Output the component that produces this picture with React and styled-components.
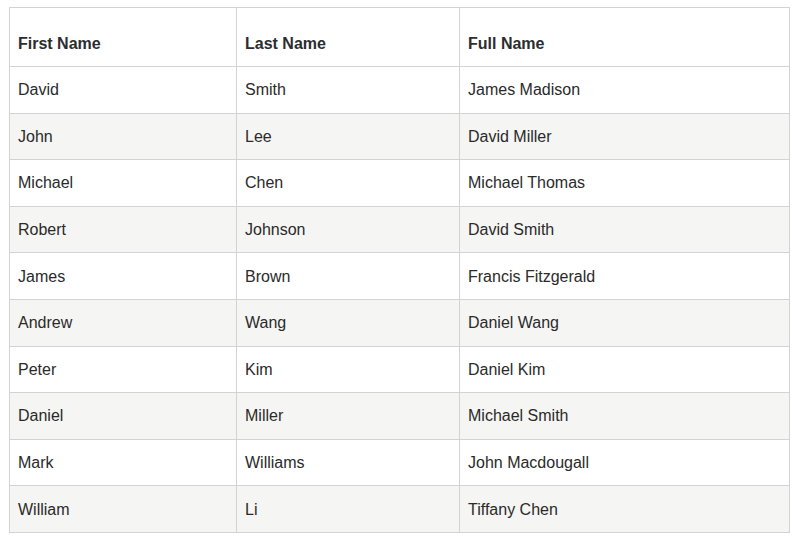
import React from "react";
import styled, { createGlobalStyle } from "styled-components";

const Global = createGlobalStyle`
  html, body { margin: 0; padding: 0; background: #fff; }
  body { font-family: "Liberation Sans", Arial, sans-serif; }
`;

const Page = styled.div`
  padding: 7px 0 0 9px;
`;

const Table = styled.table`
  width: 780px;
  table-layout: fixed;
  border-collapse: collapse;
  font-size: 16px;
  color: #2a2a2a;
`;

const Th = styled.th`
  text-align: left;
  font-weight: bold;
  color: #2b2d30;
  vertical-align: bottom;
  height: 59px;
  padding: 0 8px 13px;
  border: 1px solid #d3d3d3;
  box-sizing: border-box;
`;

const Row = styled.tr`
  background: ${(p) => (p.$odd ? "#f5f5f3" : "#fff")};
`;

const Td = styled.td`
  height: 46.6px;
  padding: 1px 8px 0;
  border: 1px solid #d3d3d3;
  box-sizing: border-box;
  vertical-align: middle;
`;

const rows = [
  ["David", "Smith", "James Madison"],
  ["John", "Lee", "David Miller"],
  ["Michael", "Chen", "Michael Thomas"],
  ["Robert", "Johnson", "David Smith"],
  ["James", "Brown", "Francis Fitzgerald"],
  ["Andrew", "Wang", "Daniel Wang"],
  ["Peter", "Kim", "Daniel Kim"],
  ["Daniel", "Miller", "Michael Smith"],
  ["Mark", "Williams", "John Macdougall"],
  ["William", "Li", "Tiffany Chen"],
];

export default function App() {
  return (
    <Page>
      <Global />
      <Table>
        <colgroup>
          <col style={{ width: 227 }} />
          <col style={{ width: 223 }} />
          <col style={{ width: 330 }} />
        </colgroup>
        <thead>
          <tr>
            <Th>First Name</Th>
            <Th>Last Name</Th>
            <Th>Full Name</Th>
          </tr>
        </thead>
        <tbody>
          {rows.map((r, i) => (
            <Row key={i} $odd={i % 2 === 1}>
              {r.map((c, j) => (
                <Td key={j}>{c}</Td>
              ))}
            </Row>
          ))}
        </tbody>
      </Table>
    </Page>
  );
}
